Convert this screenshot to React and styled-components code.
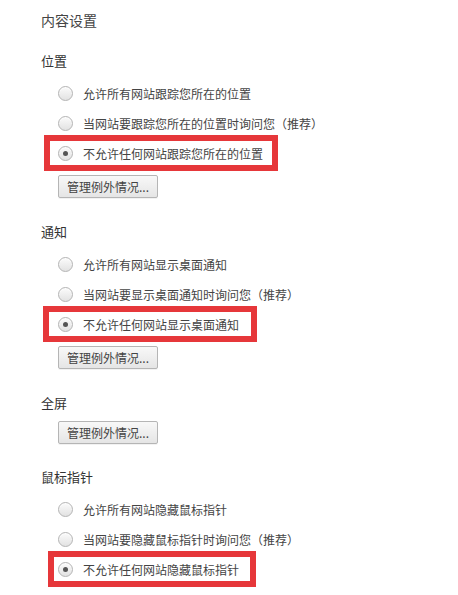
import React from 'react';
import styled, { createGlobalStyle } from 'styled-components';

const GlobalStyle = createGlobalStyle`
  html, body {
    margin: 0;
    padding: 0;
    background: #ffffff;
  }
  body {
    font-family: "Noto Sans CJK SC", "Noto Sans", sans-serif;
    color: #333333;
  }
`;

const Page = styled.div`
  width: 458px;
  min-height: 595px;
  box-sizing: border-box;
  padding: 10px 0 0 41px;
`;

const Title = styled.h1`
  margin: 0 0 21px 0;
  font-size: 14px;
  line-height: 20px;
  font-weight: normal;
  color: #444444;
`;

const Section = styled.section`
  display: flex;
  flex-direction: column;
  align-items: flex-start;
  margin-bottom: ${(p) => p.$gap || 24}px;
`;

const Heading = styled.h2`
  margin: 0 0 ${(p) => (p.$compact ? 8 : 12)}px 0;
  font-size: 13px;
  line-height: 20px;
  font-weight: normal;
  color: #333333;
`;

const Options = styled.div`
  display: flex;
  flex-direction: column;
  align-items: flex-start;
  gap: 10px;
  padding-left: 17px;
  margin-bottom: 12px;
`;

const Option = styled.label`
  position: relative;
  display: inline-flex;
  align-items: center;
  height: 20px;
  font-size: 12px;
  color: #444444;

  ${(p) =>
    p.$marked &&
    `
    &::after {
      content: '';
      position: absolute;
      top: -8px;
      bottom: -8px;
      left: -${p.$left || 14}px;
      right: -${p.$right || 15}px;
      border: 6px solid #e6373a;
      pointer-events: none;
    }
  `}
`;

const Radio = styled.span`
  position: relative;
  width: 13px;
  height: 13px;
  border-radius: 50%;
  border: 1px solid #b4b4b4;
  background: linear-gradient(#fbfbfb, #e2e2e2);
  box-shadow: inset 0 1px 1px rgba(255, 255, 255, 0.8);
  margin-right: 10px;
  flex-shrink: 0;

  ${(p) =>
    p.$checked &&
    `
    &::before {
      content: '';
      position: absolute;
      left: 50%;
      top: 50%;
      width: 5px;
      height: 5px;
      margin: -2.5px 0 0 -2.5px;
      border-radius: 50%;
      background: #555555;
    }
  `}
`;

const Button = styled.button`
  margin-left: 17px;
  height: 23px;
  padding: 0 8px;
  font-family: inherit;
  font-size: 12px;
  color: #444444;
  border: 1px solid #b5b5b5;
  border-radius: 2px;
  background: linear-gradient(#f8f8f8, #e5e5e5);
  box-shadow: 0 1px 0 rgba(0, 0, 0, 0.05);
`;

const sections = [
  {
    title: '位置',
    options: [
      '允许所有网站跟踪您所在的位置',
      '当网站要跟踪您所在的位置时询问您（推荐）',
      '不允许任何网站跟踪您所在的位置',
    ],
    box: { left: 14, right: 15 },
  },
  {
    title: '通知',
    options: [
      '允许所有网站显示桌面通知',
      '当网站要显示桌面通知时询问您（推荐）',
      '不允许任何网站显示桌面通知',
    ],
    box: { left: 15, right: 18 },
  },
  { title: '全屏', options: [], gap: 23 },
  {
    title: '鼠标指针',
    options: [
      '允许所有网站隐藏鼠标指针',
      '当网站要隐藏鼠标指针时询问您（推荐）',
      '不允许任何网站隐藏鼠标指针',
    ],
    box: { left: 10, right: 17 },
    noButton: true,
  },
];

export default function App() {
  return (
    <>
      <GlobalStyle />
      <Page>
        <Title>内容设置</Title>
        {sections.map((s) => (
          <Section key={s.title} $gap={s.gap}>
            <Heading $compact={s.options.length === 0}>{s.title}</Heading>
            {s.options.length > 0 && (
              <Options>
                {s.options.map((text, i) => {
                  const last = i === s.options.length - 1;
                  return (
                    <Option
                      key={text}
                      $marked={last}
                      $left={s.box.left}
                      $right={s.box.right}
                    >
                      <Radio $checked={last} />
                      {text}
                    </Option>
                  );
                })}
              </Options>
            )}
            {!s.noButton && <Button>管理例外情况...</Button>}
          </Section>
        ))}
      </Page>
    </>
  );
}
